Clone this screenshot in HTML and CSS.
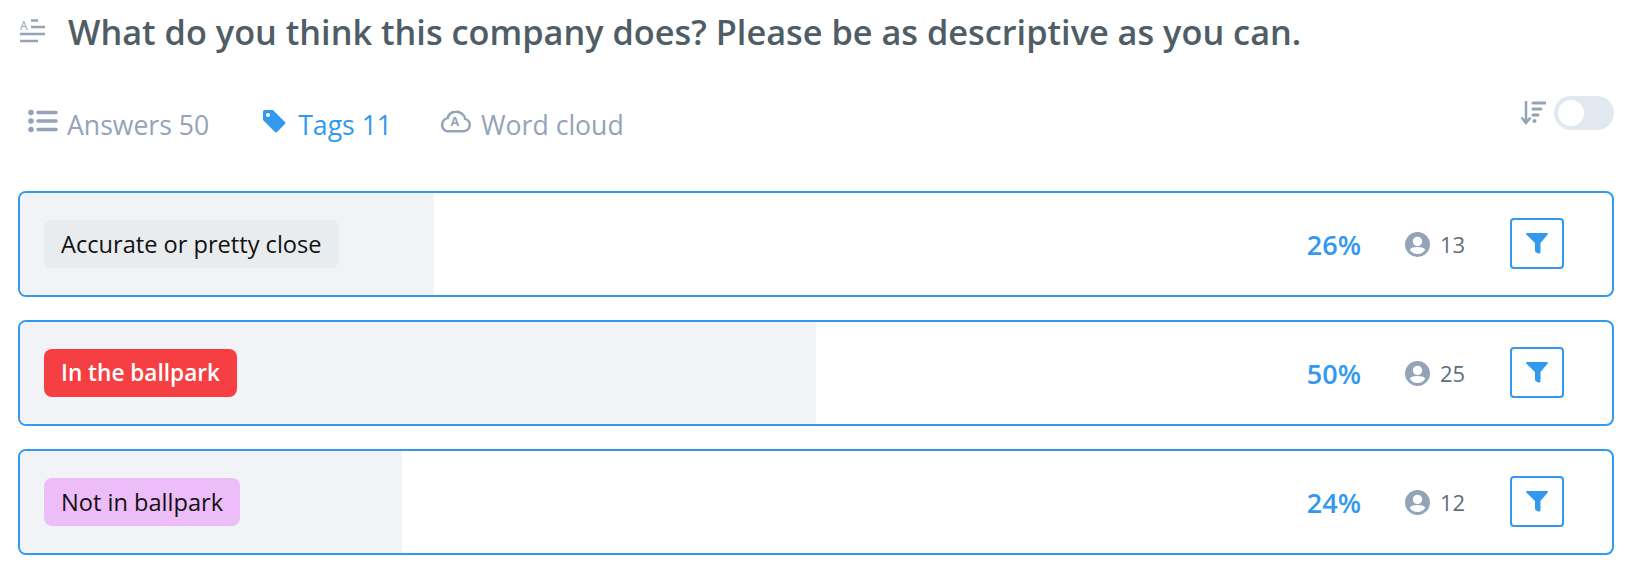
FILE: index.html
```html
<!DOCTYPE html>
<html lang="en">

<head>
    <meta charset="UTF-8">
    <meta name="viewport" content="width=device-width, initial-scale=1.0">
    <title>Question results</title>
    <link rel="stylesheet" href="styles.css">
</head>

<body>
    <div class="question">
        <svg class="question-icon" viewBox="0 0 25 24" width="25" height="24">
            <text x="0" y="11" class="icon-letter">A</text>
            <path d="M11 1.500h7M11 8h14M0 15h25M0 22h18" />
        </svg>
        <h1>What do you think this company does? Please be as descriptive as you can.</h1>
    </div>

    <div class="toolbar">
        <div class="tabs">
            <div class="tab">
                <svg class="tab-icon" viewBox="0 0 30 24" width="30" height="24">
                    <circle cx="3" cy="3.500" r="2.800" class="solid" />
                    <circle cx="3" cy="12" r="2.800" class="solid" />
                    <circle cx="3" cy="20.500" r="2.800" class="solid" />
                    <path d="M10 3.500h18M10 12h18M10 20.500h18" class="lines heavy" />
                </svg>
                Answers 50
            </div>
            <div class="tab active">
                <svg class="tab-icon tag-icon" viewBox="0 0 24 24" width="24" height="24">
                    <path d="M1 2.500A1.500 1.500 0 0 1 2.500 1H11l12 12a1.500 1.500 0 0 1 0 2l-8 8a1.500 1.500 0 0 1-2 0L1 11zM6 4a2 2 0 1 0 0 4 2 2 0 0 0 0-4z" fill="#3399ee" fill-rule="evenodd" />
                </svg>
                Tags 11
            </div>
            <div class="tab tab-cloud">
                <svg class="tab-icon" viewBox="0 2 30 20" width="34" height="23">
                    <path d="M7.500 20.500h15a5.500 5.500 0 0 0 1.500-10.800 8 8 0 0 0-8.500-6.200 7.500 7.500 0 0 0-7 5.500 6 6 0 0 0-1 11.500z" class="outline" />
                    <text x="11" y="16" class="cloud-letter">A</text>
                </svg>
                Word cloud
            </div>
        </div>
        <div class="sort">
            <svg viewBox="0 0 26 26" width="26" height="26">
                <path d="M6 1v21M1.500 17.500L6 23l4.500-5.500" class="sort-arrow" />
                <path d="M13 3h12M13 9h8M13 15h5" class="lines" />
                <circle cx="14.500" cy="21" r="2" class="solid" />
            </svg>
            <div class="toggle"><span class="knob"></span></div>
        </div>
    </div>

    <div class="rows">
        <div class="row">
            <div class="bar" style="width: 26%"></div>
            <span class="tag tag-grey">Accurate or pretty close</span>
            <span class="percent">26%</span>
            <span class="count">
                <svg class="user" viewBox="0 0 24 24" width="25" height="25"><path d="M12 0a12 12 0 1 0 0 24 12 12 0 0 0 0-24zm0 4.500a4.500 4.500 0 1 1 0 9 4.500 4.500 0 0 1 0-9zm0 16.500a9 9 0 0 1-7.500-4c1-1.800 4-2.500 7.500-2.500s6.500.7 7.500 2.500a9 9 0 0 1-7.500 4z" fill-rule="evenodd" /></svg>
                13
            </span>
            <button class="filter">
                <svg viewBox="0 0 22 22" width="22" height="22"><path d="M1 1h20c.8 0 1.200.9.7 1.500L14.500 11v9c0 1-1 1.500-1.500 1.500-1 0-1.800-.3-3-1.200-.5-.4-1-.8-1-1.500V11L.3 2.500C-.2 1.900.2 1 1 1z" /></svg>
            </button>
        </div>
        <div class="row">
            <div class="bar" style="width: 50%"></div>
            <span class="tag tag-red">In the ballpark</span>
            <span class="percent">50%</span>
            <span class="count">
                <svg class="user" viewBox="0 0 24 24" width="25" height="25"><path d="M12 0a12 12 0 1 0 0 24 12 12 0 0 0 0-24zm0 4.500a4.500 4.500 0 1 1 0 9 4.500 4.500 0 0 1 0-9zm0 16.500a9 9 0 0 1-7.500-4c1-1.800 4-2.500 7.500-2.500s6.500.7 7.500 2.500a9 9 0 0 1-7.500 4z" fill-rule="evenodd" /></svg>
                25
            </span>
            <button class="filter">
                <svg viewBox="0 0 22 22" width="22" height="22"><path d="M1 1h20c.8 0 1.200.9.7 1.500L14.500 11v9c0 1-1 1.500-1.500 1.500-1 0-1.800-.3-3-1.200-.5-.4-1-.8-1-1.500V11L.3 2.500C-.2 1.900.2 1 1 1z" /></svg>
            </button>
        </div>
        <div class="row">
            <div class="bar" style="width: 24%"></div>
            <span class="tag tag-pink">Not in ballpark</span>
            <span class="percent">24%</span>
            <span class="count">
                <svg class="user" viewBox="0 0 24 24" width="25" height="25"><path d="M12 0a12 12 0 1 0 0 24 12 12 0 0 0 0-24zm0 4.500a4.500 4.500 0 1 1 0 9 4.500 4.500 0 0 1 0-9zm0 16.500a9 9 0 0 1-7.500-4c1-1.800 4-2.500 7.500-2.500s6.500.7 7.500 2.500a9 9 0 0 1-7.500 4z" fill-rule="evenodd" /></svg>
                12
            </span>
            <button class="filter">
                <svg viewBox="0 0 22 22" width="22" height="22"><path d="M1 1h20c.8 0 1.200.9.7 1.500L14.500 11v9c0 1-1 1.500-1.500 1.500-1 0-1.800-.3-3-1.200-.5-.4-1-.8-1-1.500V11L.3 2.500C-.2 1.900.2 1 1 1z" /></svg>
            </button>
        </div>
    </div>
</body>

</html>
```

FILE: styles.css
```css
html,
body {
    margin: 0;
    padding: 0;
    background: #fff;
}

body {
    font-family: "Open Sans", "Noto Sans", sans-serif;
    padding: 6px 27px 0 18px;
    height: 572px;
    overflow: hidden;
}

.question {
    display: flex;
    align-items: center;
    gap: 23px;
    height: 50px;
    padding-left: 2px;
}

.question-icon {
    flex: none;
    overflow: visible;
}

.question-icon path {
    stroke: #94a3b8;
    stroke-width: 2.600;
    fill: none;
}

.icon-letter {
    font-size: 12px;
    fill: #94a3b8;
}

h1 {
    margin: 0;
    font-size: 34.300px;
    font-weight: 600;
    color: #4f5d66;
    white-space: nowrap;
}

.toolbar {
    display: flex;
    justify-content: space-between;
    align-items: flex-start;
    height: 135px;
    padding-top: 42px;
    box-sizing: border-box;
}

.tabs {
    display: flex;
    gap: 53px;
    padding-left: 10px;
    padding-top: 9px;
}

.tab {
    display: flex;
    align-items: center;
    gap: 9px;
    font-size: 26.600px;
    color: #94a3b8;
}

.tab.active {
    color: #3399ee;
}

.tab-cloud {
    margin-left: -7px;
}

.tab-icon {
    flex: none;
    margin-bottom: 8px;
}

.tag-icon {
    margin-right: 3px;
}

.solid {
    fill: #94a3b8;
}

.lines {
    stroke: #94a3b8;
    stroke-width: 3;
    stroke-linecap: round;
    fill: none;
}

.heavy {
    stroke-width: 3.600;
}

.outline {
    stroke: #94a3b8;
    stroke-width: 2.200;
    fill: none;
}

.cloud-letter {
    font-size: 11px;
    font-weight: 700;
    fill: #94a3b8;
}

.sort {
    display: flex;
    align-items: center;
    gap: 8px;
    margin-top: -2px;
}

.sort-arrow {
    stroke: #94a3b8;
    stroke-width: 2.500;
    fill: none;
}

.toggle {
    width: 60px;
    height: 34px;
    border-radius: 17px;
    background: #e2e8f0;
    display: flex;
    align-items: center;
    padding-left: 4px;
    box-sizing: border-box;
}

.knob {
    width: 26px;
    height: 26px;
    border-radius: 50%;
    background: #fff;
}

.rows {
    display: flex;
    flex-direction: column;
    gap: 23px;
}

.row {
    position: relative;
    display: flex;
    align-items: center;
    height: 106px;
    box-sizing: border-box;
    border: 2px solid #3399ee;
    border-radius: 8px;
    padding: 0 48px 0 24px;
    overflow: hidden;
}

.bar {
    position: absolute;
    top: 0;
    bottom: 0;
    left: 0;
    background: #f1f3f7;
}

.tag {
    position: relative;
    font-size: 23.600px;
    line-height: 48px;
    padding: 0 17px;
    border-radius: 8px;
    color: #111;
}

.tag-grey {
    background: #e9ecef;
}

.tag-red {
    background: #f63f42;
    color: #fff;
    font-size: 22.600px;
    font-weight: 600;
}

.tag-pink {
    background: #edbdfa;
}

.percent {
    position: relative;
    margin-left: auto;
    font-size: 27px;
    font-weight: 600;
    color: #3399ee;
}

.count {
    position: relative;
    display: flex;
    align-items: center;
    gap: 10px;
    width: 60px;
    margin-left: 44px;
    font-size: 22px;
    color: #5f6f7b;
}

.user {
    flex: none;
    fill: #94a3b8;
}

.filter {
    position: relative;
    display: flex;
    align-items: center;
    justify-content: center;
    width: 54px;
    height: 51px;
    margin-left: 45px;
    margin-bottom: 2px;
    padding: 0;
    background: #fff;
    border: 2px solid #3399ee;
    border-radius: 4px;
    cursor: pointer;
}

.filter svg {
    fill: #3399ee;
}
```
